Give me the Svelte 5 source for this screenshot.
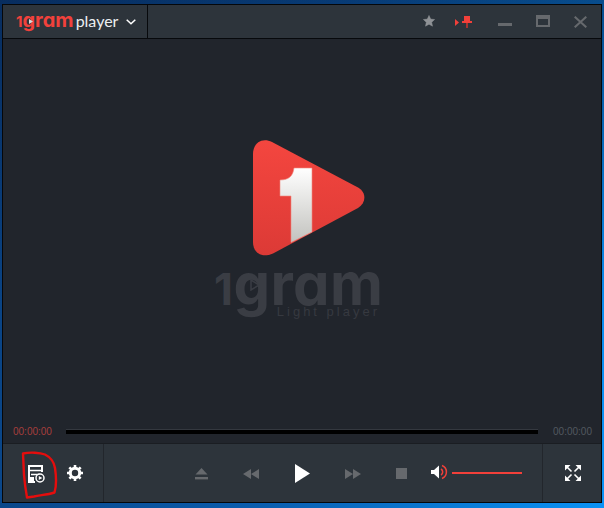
<script>
  const time = '00:00:00';
</script>

<div class="desktop">
  <div class="window">
    <header class="titlebar">
      <div class="brand">
        <span class="brand-name"><span class="one">1</span>gram</span>
        <svg class="brand-play" viewBox="0 0 4 5" width="4" height="5"><path d="M0 0L4 2.500L0 5Z" fill="#d8dadc"/></svg>
        <span class="brand-sub">player</span>
        <svg class="chev" viewBox="0 0 10 6" width="10" height="6"><path d="M.7.7L5 4.800L9.300.7" fill="none" stroke="#fff" stroke-width="1.500"/></svg>
      </div>
      <div class="winbtns">
        <svg class="i-star" viewBox="0 0 12 12" width="12" height="12"><path d="M6 .4L7.700 4.100L11.600 4.500L8.700 7.200L9.500 11.200L6 9.200L2.500 11.200L3.300 7.200L.4 4.500L4.300 4.100Z" fill="#8f9296" stroke="#8f9296" stroke-width=".5" stroke-linejoin="round"/></svg>
        <svg class="i-pin" viewBox="0 0 17 12" width="17" height="12"><path d="M0 3L4 6.500L0 10Z" fill="#f2403a"/><path d="M9 0H15V5H17V7H7V5H9Z" fill="#f2403a"/><path d="M11 7H13V12H11Z" fill="#a8332f"/></svg>
        <svg class="i-min" viewBox="0 0 14 3" width="14" height="3"><rect width="14" height="3" fill="#66696d"/></svg>
        <svg class="i-max" viewBox="0 0 14 12" width="14" height="12"><path d="M1 1H13V11H1Z" fill="none" stroke="#66696d" stroke-width="2"/><rect x="1" y="1" width="12" height="3" fill="#66696d"/></svg>
        <svg class="i-close" viewBox="0 0 13 12" width="13" height="12"><path d="M.7.7L12.300 11.300M12.300.7L.7 11.300" stroke="#66696d" stroke-width="2" fill="none"/></svg>
      </div>
    </header>

    <main class="stage">
      <svg class="logo" viewBox="0 0 112 116" width="112" height="116">
        <defs>
          <linearGradient id="red" x1="0" y1="0" x2="0" y2="1"><stop offset="0" stop-color="#f4463f"/><stop offset="1" stop-color="#dc3a36"/></linearGradient>
          <linearGradient id="white" x1="0" y1="0" x2="0" y2="1"><stop offset="0" stop-color="#ffffff"/><stop offset="1" stop-color="#c2c2be"/></linearGradient>
        </defs>
        <path d="M0 14C0 3 9-3 19 2L105 47.500C113.500 52 113.500 63 105 68L20 113.500C9 118.500 0 113 0 102Z" fill="url(#red)"/>
        <path d="M27 40C36 40 40 36 41 28H59V92L38 102.500V56H27Z" fill="url(#white)" stroke="#f08a80" stroke-width=".6"/>
      </svg>
      <div class="mark">
        <span class="mark-name"><span class="mark-one">1</span>gram</span>
        <svg class="mark-play" viewBox="0 0 10 12" width="10" height="12"><path d="M1 1L9 6L1 11Z" fill="#21252c" stroke="#3a3d44" stroke-width="1.500"/></svg>
        <span class="mark-sub">Light player</span>
      </div>
    </main>

    <div class="timeline">
      <span class="elapsed">{time}</span>
      <div class="track"></div>
      <span class="total">{time}</span>
    </div>

    <footer class="controls">
      <div class="ctl-left">
        <svg class="i-list" viewBox="0 0 17 18" width="17" height="18">
          <path d="M1 7V1H14V7M1 1V17H7" fill="none" stroke="#fff" stroke-width="2"/>
          <path d="M1 5.500H14M3 9.500H12" stroke="#fff" stroke-width="1.600"/>
          <rect x="1" y="12" width="5" height="5" fill="#fff"/>
          <circle cx="12" cy="13" r="4" fill="#2d343b" stroke="#fff" stroke-width="1.500"/>
          <path d="M10.800 11L14.300 13L10.800 15Z" fill="#fff"/>
        </svg>
        <svg class="i-gear" viewBox="0 0 16 16" width="16" height="16">
          <circle cx="8" cy="8" r="4.700" fill="none" stroke="#fff" stroke-width="3"/>
          <path d="M8 0V16M0 8H16M2.300 2.300L13.700 13.700M13.700 2.300L2.300 13.700" stroke="#fff" stroke-width="2.600" stroke-dasharray="3 10 3"/>
        </svg>
        <svg class="scribble" viewBox="0 0 38 48" width="38" height="48">
          <path d="M3 2.500C10 1 20 1.500 25 3.500C31 6.500 34 11 35 17C36.500 27 36.500 35 34.500 41.500C27 44 20 44 14 45.500L7 46.500C5.500 38 4.500 30 4 24Z" fill="none" stroke="#e50d0d" stroke-width="2.400" stroke-linejoin="round"/>
        </svg>
      </div>
      <div class="transport">
        <svg class="i-eject" viewBox="0 0 13 12" width="13" height="12"><path d="M6.500 0L12.500 6.500H.5Z" fill="#66696d"/><rect y="9" width="13" height="2.400" fill="#66696d"/></svg>
        <svg class="i-rew" viewBox="0 0 16 10" width="16" height="10"><path d="M8 0V10L0 5ZM16 0V10L8 5Z" fill="#66696d"/></svg>
        <svg class="i-play" viewBox="0 0 15 19" width="15" height="19"><path d="M0 0L15 9.500L0 19Z" fill="#fff"/></svg>
        <svg class="i-fwd" viewBox="0 0 16 10" width="16" height="10"><path d="M0 0V10L8 5ZM8 0V10L16 5Z" fill="#66696d"/></svg>
        <svg class="i-stop" viewBox="0 0 11 11" width="11" height="11"><rect width="11" height="11" fill="#66696d"/></svg>
        <svg class="i-vol" viewBox="0 0 17 16" width="17" height="16">
          <path d="M0 6H3L8 1.500V14.500L3 10H0Z" fill="#fff"/>
          <path d="M10 5A3.500 3.500 0 0 1 10 11M11 1.500A7 7 0 0 1 11 14.500" fill="none" stroke="#f2403a" stroke-width="1.500"/>
        </svg>
        <div class="vol-track"></div>
      </div>
      <div class="ctl-right">
        <svg viewBox="0 0 16 16" width="16" height="16">
          <path d="M0 0H5.500L0 5.500ZM16 0V5.500L10.500 0ZM0 16V10.500L5.500 16ZM16 16H10.500L16 10.500Z" fill="#fff"/>
          <path d="M2 2L6.500 6.500M14 2L9.500 6.500M2 14L6.500 9.500M14 14L9.500 9.500" stroke="#fff" stroke-width="1.600"/>
        </svg>
      </div>
    </footer>
  </div>
</div>

<style>
  :global(body) { margin: 0; background: #0a4d8f; }
  .desktop {
    width: 604px; height: 508px; box-sizing: border-box; padding: 4px 2px 5px 2px;
    background:
      linear-gradient(180deg, rgba(5,30,70,.55) 0, rgba(5,30,70,0) 60%),
      linear-gradient(100deg, #0a3f7d 0%, #0a5dae 50%, #0a92f5 100%);
    overflow: hidden;
  }
  .window {
    width: 600px; height: 499px; box-sizing: border-box; border: 1px solid #05070a;
    display: flex; flex-direction: column; background: #21252c;
    font-family: "Liberation Sans", Arial, sans-serif;
  }
  svg { display: block; flex: none; }

  .titlebar { height: 34px; box-sizing: border-box; flex: none; display: flex; justify-content: space-between; background: #2d343b; border-bottom: 1px solid #07090c; }
  .brand { position: relative; width: 145px; box-sizing: border-box; flex: none; display: flex; align-items: center; border-right: 1px solid #07090c; padding-left: 13px; }
  .brand-name { font-family: "Inter", sans-serif; font-weight: 700; font-size: 20px; font-feature-settings: "cv11"; color: #f1413b; line-height: 20px; position: relative; top: -1px; }
  .one { font-size: 15px; }
  .brand-play { position: absolute; left: 26px; top: 14px; }
  .brand-sub { font-family: "Lato", sans-serif; font-weight: 400; font-size: 16px; color: #eceef0; margin-left: 2px; line-height: 20px; position: relative; top: -1px; }
  .chev { margin-left: 8px; }

  .winbtns { display: flex; align-items: center; padding-right: 14px; }
  .i-star { margin-right: 20px; margin-top: -1px; }
  .i-pin { margin-right: 26px; margin-top: 1px; }
  .i-min { margin-right: 24px; margin-top: 5px; }
  .i-max { margin-right: 24px; margin-top: -2px; }
  .i-close { margin-top: 1px; }

  .stage { flex: 1; min-height: 0; display: flex; flex-direction: column; align-items: center; background: #21252c; padding-top: 101px; box-sizing: border-box; }
  .logo { margin-left: 13px; }
  .mark { position: relative; margin-top: 8px; margin-left: -10px; width: 166px; height: 62px; }
  .mark-name { display: block; font-family: "Inter", sans-serif; font-weight: 700; font-size: 58px; line-height: 56px; font-feature-settings: "cv11"; letter-spacing: .4px; color: #3a3d44; text-align: center; margin-top: -8px; white-space: nowrap; }
  .mark-one { font-size: 44px; }
  .mark-play { position: absolute; left: 36px; top: 15px; }
  .mark-sub { position: absolute; right: 0; top: 41px; font-family: "Liberation Sans", sans-serif; font-size: 13px; line-height: 14px; letter-spacing: 3px; color: #363940; white-space: nowrap; }

  .timeline { height: 24px; flex: none; display: flex; align-items: center; padding: 0 9px 0 10px; background: #21252c; border-bottom: 1px solid #1a1d22; box-sizing: border-box; font-size: 10px; }
  .elapsed { color: #a53e3c; width: 53px; flex: none; }
  .total { color: #51585f; width: 41px; flex: none; text-align: right; margin-left: 13px; }
  .track { flex: 1; height: 4px; background: #000; border-top: 1px solid #34383f; margin-top: -1px; }

  .controls { height: 58px; flex: none; display: flex; background: #2d343b; }
  .ctl-left { position: relative; width: 101px; flex: none; display: flex; align-items: center; box-sizing: border-box; padding-left: 25px; border-right: 1px solid #22262c; }
  .i-gear { margin-left: 22px; }
  .i-list { margin-top: 1px; }
  .scribble { position: absolute; left: 17px; top: 7px; }

  .transport { flex: 1; display: flex; align-items: center; padding-left: 91px; border-right: 1px solid #22262c; }
  .i-eject { margin-right: 35px; margin-top: 2px; }
  .i-rew { margin-right: 36px; margin-top: 1px; }
  .i-play { margin-right: 35px; margin-top: 0; }
  .i-fwd { margin-right: 35px; margin-top: 1px; }
  .i-stop { margin-right: 24px; }
  .i-vol { margin-top: -3px; }
  .vol-track { width: 70px; height: 2px; background: #f2403a; margin-left: 4px; margin-top: -1px; }

  .ctl-right { width: 58px; flex: none; display: flex; align-items: center; justify-content: center; padding-left: 2px; box-sizing: border-box; }
</style>
